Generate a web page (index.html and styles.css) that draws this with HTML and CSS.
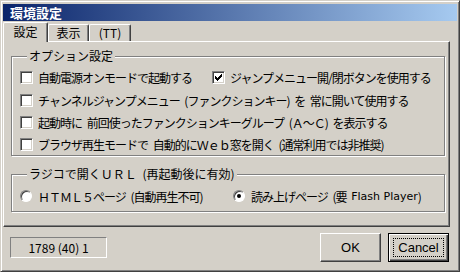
FILE: index.html
```html
<!DOCTYPE html>
<html lang="ja">
<head>
  <meta charset="UTF-8">
  <title>環境設定</title>
  <link rel="stylesheet" href="styles.css">
</head>
<body>
  <div class="window">
    <div class="titlebar">環境設定</div>

    <div class="tabs">
      <div class="tab active">設定</div>
      <div class="tab">表示</div>
      <div class="tab tt">(TT)</div>
    </div>

    <div class="panel">
      <fieldset class="group options">
        <legend>オプション設定</legend>
        <div class="row">
          <label class="check first"><span class="box"></span>自動電源オンモードで起動する</label>
          <label class="check"><span class="box"><svg width="7" height="7" viewBox="0 0 7 7"><path d="M0 2h1v1h1v1h1V3h1V2h1V1h1V0h1v3H6v1H5v1H4v1H3v1H2V6H1V5H0z" fill="#000"/></svg></span>ジャンプメニュー開/閉ボタンを使用する</label>
        </div>
        <div class="row second">
          <label class="check"><span class="box"></span>チャンネルジャンプメニュー (ファンクションキー) を 常に開いて使用する</label>
        </div>
        <div class="row">
          <label class="check"><span class="box"></span>起動時に 前回使ったファンクションキーグループ (Ａ～Ｃ) を表示する</label>
        </div>
        <div class="row">
          <label class="check"><span class="box"></span>ブラウザ再生モードで 自動的にＷｅｂ窓を開く (通常利用では非推奨)</label>
        </div>
      </fieldset>

      <fieldset class="group url">
        <legend>ラジコで開くＵＲＬ (再起動後に有効)</legend>
        <div class="row">
          <label class="radio first"><span class="circle"></span>ＨＴＭＬ５ページ (自動再生不可)</label>
          <label class="radio"><span class="circle on"></span>読み上げページ (要 <span class="latin">Flash Player</span>)</label>
        </div>
      </fieldset>
    </div>

    <div class="footer">
      <div class="status">1789 (40) 1</div>
      <div class="buttons">
        <button class="btn">OK</button>
        <button class="btn default"><span class="focus">Cancel</span></button>
      </div>
    </div>
  </div>
</body>
</html>
```

FILE: styles.css
```css
/* ウィンドウ全体 */
body {
  margin: 0;
  font-family: "Noto Sans CJK JP", sans-serif;
  font-size: 12px;
  color: #000;
}

.window {
  width: 460px;
  height: 272px;
  box-sizing: border-box;
  background: #d4d0c8;
  border: 1px solid;
  border-color: #d4d0c8 #404040 #404040 #d4d0c8;
  box-shadow: inset 1px 1px #fff, inset -1px -1px #808080;
  padding: 2px;
}

.titlebar {
  margin-top: 1px;
  height: 17px;
  line-height: 17px;
  padding-left: 7px;
  color: #fff;
  font-weight: bold;
  font-size: 13px;
  background: linear-gradient(to right, #0a246a, #a6caf0);
}

/* タブ */
.tabs {
  display: flex;
  align-items: flex-end;
  height: 20px;
}

.tab {
  box-sizing: border-box;
  height: 17px;
  width: 41px;
  line-height: 15px;
  text-align: center;
  border-top: 1px solid #fff;
  border-left: 1px solid #fff;
  border-right: 1px solid #404040;
  box-shadow: inset -1px 0 #808080;
  border-radius: 2px 2px 0 0;
  background: #d4d0c8;
}

.tab.active {
  position: relative;
  z-index: 1;
  width: 45px;
  height: 20px;
  line-height: 18px;
  margin-bottom: -1px;
}

.tab.tt {
  width: 42px;
}

.panel {
  box-sizing: border-box;
  width: 447px;
  height: 186px;
  border: 1px solid;
  border-color: #fff #404040 #404040 #fff;
  box-shadow: inset -1px -1px #808080;
  padding: 7px 0 0 7px;
}

/* グループボックス */
.group {
  width: 434px;
  box-sizing: border-box;
  margin: 0;
  border: 1px solid #808080;
  box-shadow: inset 1px 1px #fff, 1px 1px #fff;
  padding: 3px 0 0 8px;
}

.group legend {
  line-height: 14px;
  padding: 0 2px;
  margin-left: 7px;
  background: #d4d0c8;
  word-spacing: 3px;
}

.group.url {
  margin-top: 11px;
  padding-top: 4px;
  padding-bottom: 4px;
}

.row {
  display: flex;
  height: 22px;
  align-items: center;
}

.row.second {
  margin-top: 1px;
}

.check,
.radio {
  display: flex;
  align-items: center;
  white-space: pre;
  letter-spacing: -1px;
  word-spacing: 3px;
}

.check.first {
  width: 192px;
}

.radio.first {
  width: 213px;
}

.box {
  box-sizing: border-box;
  width: 13px;
  height: 13px;
  margin-right: 5px;
  display: flex;
  align-items: center;
  justify-content: center;
  background: #fff;
  border: 1px solid;
  border-color: #808080 #fff #fff #808080;
  box-shadow: inset 1px 1px #404040, inset -1px -1px #d4d0c8;
}

.circle {
  box-sizing: border-box;
  width: 12px;
  height: 12px;
  margin-right: 6px;
  border-radius: 50%;
  background: #fff;
  border: 1px solid;
  border-color: #808080 #fff #fff #808080;
  box-shadow: inset 1px 1px #404040;
  display: flex;
  align-items: center;
  justify-content: center;
}

.circle.on::after {
  content: "";
  width: 4px;
  height: 4px;
  border-radius: 50%;
  background: #000;
}

.latin {
  font-family: "DejaVu Sans", sans-serif;
  font-size: 11px;
  letter-spacing: 0;
  word-spacing: 0;
}

/* 下部 */
.footer {
  height: 41px;
  display: flex;
  align-items: center;
  justify-content: space-between;
  padding: 0 8px 0 7px;
}

.status {
  box-sizing: border-box;
  width: 97px;
  height: 21px;
  line-height: 19px;
  text-align: center;
  border: 1px solid;
  border-color: #808080 #fff #fff #808080;
}

.buttons {
  display: flex;
  gap: 7px;
}

.btn {
  box-sizing: border-box;
  width: 61px;
  height: 29px;
  padding: 0;
  font-family: "Liberation Sans", sans-serif;
  font-size: 13px;
  color: #000;
  background: #d4d0c8;
  border: 1px solid;
  border-color: #fff #404040 #404040 #fff;
  box-shadow: inset -1px -1px #808080;
}

.btn.default {
  border: 1px solid #000;
  box-shadow: inset 1px 1px #fff, inset -1px -1px #404040, inset -2px -2px #808080;
  display: flex;
  align-items: center;
  justify-content: center;
}

.focus {
  box-sizing: border-box;
  width: 51px;
  height: 19px;
  line-height: 17px;
  border: 1px dotted #000;
}
```
